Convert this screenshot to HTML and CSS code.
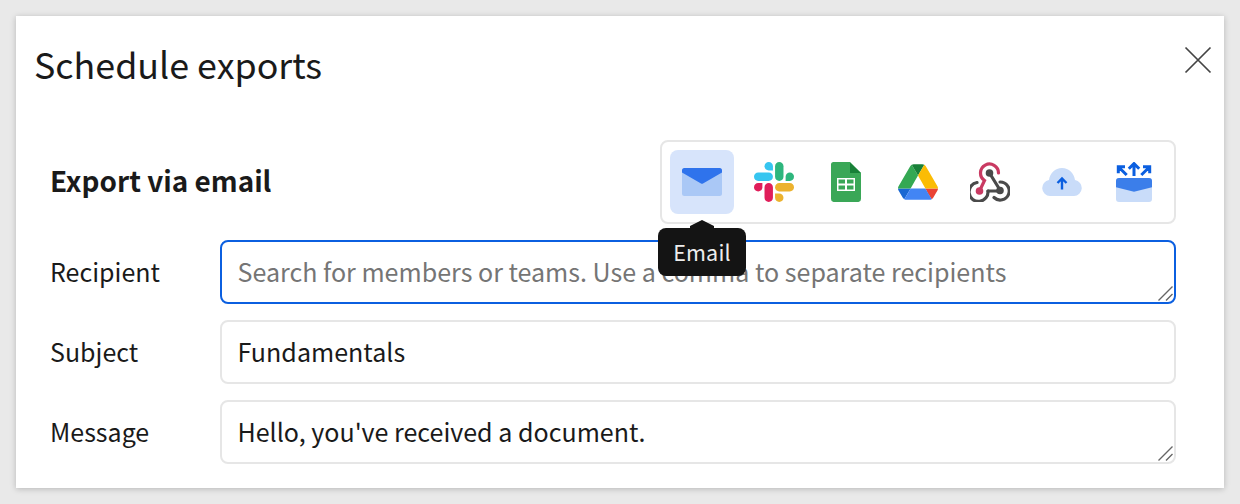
FILE: index.html
```html
<!DOCTYPE html>
<html lang="en">
<head>
<meta charset="utf-8">
<title>Schedule exports</title>
<link rel="stylesheet" href="styles.css">
</head>
<body>
<section class="modal">
  <header class="modal-header">
    <h1 class="modal-title">Schedule exports</h1>
    <button class="close" type="button" aria-label="Close">
      <svg width="28" height="28" viewBox="0 0 28 28"><path d="M1.5 1.500l25 25M26.500 1.500l-25 25" stroke="#444" stroke-width="1.700" fill="none"/></svg>
    </button>
  </header>
  <div class="form">
    <div class="via-row">
      <h2 class="via-title">Export via email</h2>
      <div class="picker">
        <div class="tile tile-active">
          <svg width="40" height="40" viewBox="0 0 40 40"><rect y="6" width="40" height="28" rx="2.500" fill="#aac8f6"/><path d="M2.500 6h35A2.500 2.500 0 0 1 40 8.500V10.500L21 21.400q-1 .5-2 0L0 10.500V8.500A2.500 2.500 0 0 1 2.500 6z" fill="#2f73ec"/></svg>
          <div class="tooltip">Email</div>
        </div>
        <div class="tile">
          <svg width="40" height="40" viewBox="0 0 122.800 122.800"><path d="M25.800 77.600c0 7.100-5.800 12.900-12.900 12.900S0 84.700 0 77.600s5.800-12.900 12.900-12.900h12.900v12.900z" fill="#E01E5A"/><path d="M32.300 77.600c0-7.100 5.800-12.900 12.900-12.900s12.900 5.800 12.900 12.900v32.300c0 7.100-5.800 12.900-12.900 12.900s-12.900-5.800-12.900-12.900V77.600z" fill="#E01E5A"/><path d="M45.200 25.800c-7.100 0-12.900-5.800-12.900-12.900S38.100 0 45.200 0s12.900 5.800 12.900 12.900v12.900H45.200z" fill="#36C5F0"/><path d="M45.200 32.300c7.100 0 12.900 5.800 12.900 12.900s-5.800 12.900-12.900 12.900H12.900C5.800 58.100 0 52.300 0 45.200s5.800-12.900 12.900-12.900h32.300z" fill="#36C5F0"/><path d="M97 45.200c0-7.100 5.800-12.900 12.900-12.900s12.900 5.800 12.900 12.900-5.800 12.900-12.900 12.900H97V45.200z" fill="#2EB67D"/><path d="M90.500 45.200c0 7.100-5.800 12.900-12.900 12.900s-12.900-5.800-12.900-12.900V12.900C64.700 5.800 70.500 0 77.600 0s12.900 5.800 12.900 12.900v32.300z" fill="#2EB67D"/><path d="M77.600 97c7.100 0 12.900 5.800 12.900 12.900s-5.800 12.900-12.900 12.900-12.900-5.800-12.900-12.900V97h12.900z" fill="#ECB22E"/><path d="M77.600 90.500c-7.100 0-12.900-5.800-12.900-12.900s5.800-12.900 12.900-12.900h32.300c7.100 0 12.900 5.800 12.900 12.900s-5.800 12.900-12.900 12.900H77.600z" fill="#ECB22E"/></svg>
        </div>
        <div class="tile">
          <svg width="40" height="40" viewBox="0 0 40 40"><path d="M7.500 0H24l11 11v26a3 3 0 0 1-2.500 3h-25A3 3 0 0 1 5 37V2.500A2.500 2.500 0 0 1 7.500 0z" fill="#3aa757"/><path d="M24 0.500L35 11H24z" fill="#188038"/><path d="M11 16h18v13H11z" fill="#fff"/><path d="M12.500 17.500h6.500v4h-6.500zM21 17.500h6.500v4H21zM12.500 23.500h6.500v4h-6.500zM21 23.500h6.500v4H21z" fill="#3aa757"/></svg>
        </div>
        <div class="tile">
          <svg width="40" height="36" viewBox="0 0 87.300 78"><path d="m6.600 66.850 3.850 6.650c.8 1.400 1.950 2.500 3.300 3.300l13.750-23.800h-27.500c0 1.550.4 3.100 1.200 4.500z" fill="#1967d2"/><path d="m43.650 25-13.750-23.800c-1.350.8-2.500 1.900-3.300 3.300l-25.400 44a9.060 9.060 0 0 0 -1.200 4.500h27.500z" fill="#34a853"/><path d="m73.550 76.800c1.350-.8 2.500-1.900 3.300-3.300l1.600-2.750 7.650-13.250c.8-1.400 1.200-2.950 1.200-4.500h-27.502l5.852 11.500z" fill="#ea4335"/><path d="m43.650 25 13.750-23.800c-1.350-.8-2.900-1.200-4.500-1.200h-18.500c-1.600 0-3.150.45-4.500 1.200z" fill="#188038"/><path d="m59.800 53h-32.300l-13.750 23.800c1.350.8 2.900 1.200 4.500 1.200h50.800c1.600 0 3.150-.45 4.500-1.200z" fill="#4285f4"/><path d="m73.400 26.500-12.700-22c-.8-1.400-1.950-2.500-3.300-3.300l-13.750 23.800 16.150 28h27.450c0-1.550-.4-3.100-1.200-4.500z" fill="#fbbc04"/></svg>
        </div>
        <div class="tile">
          <svg width="40" height="40" viewBox="0 0 40 40" fill="none" stroke-width="3.200" stroke-linecap="round"><path d="M19.500 11L30 28" stroke="#4a4a4a"/><path d="M18 29H30" stroke="#4a4a4a"/><path d="M7 20.500A9.500 9.500 0 1 0 18 29" stroke="#4a4a4a"/><path d="M30 20A9 9 0 1 1 24 35.500" stroke="#4a4a4a"/><path d="M9.500 29L14.500 18.500A9 9 0 1 1 28.500 11" stroke="#c93a62"/><circle cx="19.500" cy="11" r="3.800" fill="#4a4a4a" stroke="none"/><circle cx="9.500" cy="29" r="3.800" fill="#c93a62" stroke="none"/><circle cx="30" cy="28.500" r="3.800" fill="#4a4a4a" stroke="none"/></svg>
        </div>
        <div class="tile">
          <svg width="40" height="40" viewBox="0 0 40 40"><path d="M8 34a8 8 0 0 1-1-15.900C8 11 13 6 20 6c7 0 12 5 13 12.100A8 8 0 0 1 32 34z" fill="#c9dcf9"/><path d="M20 27.500V17M15.500 21l4.500-4.500 4.500 4.500" stroke="#0b5fe0" stroke-width="2.400" fill="none"/></svg>
        </div>
        <div class="tile">
          <svg width="40" height="40" viewBox="0 0 40 40"><path d="M2 19a3 3 0 0 1 3-3h30a3 3 0 0 1 3 3v18a3 3 0 0 1-3 3H5a3 3 0 0 1-3-3z" fill="#c9dcf9"/><path d="M5 16h30a3 3 0 0 1 3 3v6.300l-18 4.500-18-4.500V19a3 3 0 0 1 3-3z" fill="#3b7eea"/><path d="M20 14V2M14.800 6.800L20 1.600l5.200 5.200M12.700 13L4.300 4.700M4.300 11.300V4.700H11M27.300 13L35.700 4.700M35.700 11.300V4.700H29" stroke="#0b5fe0" stroke-width="3" fill="none"/></svg>
        </div>
      </div>
    </div>
    <div class="fields">
      <label class="field-label" for="recipient">Recipient</label>
      <div class="control-wrap">
        <textarea class="control control-focus" id="recipient" placeholder="Search for members or teams. Use a comma to separate recipients"></textarea>
        <svg class="grip" width="15" height="15" viewBox="0 0 15 15"><path d="M.5 14.500L14.500.5M8 14.500l6.500-6.500" stroke="#666" stroke-width="1.400" fill="none"/></svg>
      </div>
      <label class="field-label" for="subject">Subject</label>
      <div class="control-wrap">
        <input class="control control-input" id="subject" type="text" value="Fundamentals">
      </div>
      <label class="field-label" for="message">Message</label>
      <div class="control-wrap">
        <textarea class="control" id="message">Hello, you've received a document.</textarea>
        <svg class="grip" width="15" height="15" viewBox="0 0 15 15"><path d="M.5 14.500L14.500.5M8 14.500l6.500-6.500" stroke="#666" stroke-width="1.400" fill="none"/></svg>
      </div>
    </div>
  </div>
</section>
</body>
</html>
```
FILE: styles.css
```css
* { box-sizing: border-box; }
html, body { height: 100%; }
body {
  margin: 0;
  padding: 16px;
  background: #e9e9e9;
  color: #1a1a1a;
  font-family: "Noto Sans CJK SC", "Noto Sans", sans-serif;
  overflow: hidden;
}
.modal {
  height: 472px;
  background: #fff;
  box-shadow: 0 1px 6px rgba(0, 0, 0, .22);
  display: flex;
  flex-direction: column;
}
.modal-header {
  height: 124px;
  padding: 27px 12px 0 18px;
  display: flex;
  justify-content: space-between;
  align-items: flex-start;
}
.modal-title {
  margin: 0;
  font-size: 35.800px;
  font-weight: 400;
  line-height: 40px;
}
.close {
  width: 28px;
  height: 28px;
  margin-top: 3px;
  padding: 0;
  border: 0;
  background: none;
  display: block;
}
.close svg { display: block; }
.form {
  padding: 0 48px 0 34px;
  display: flex;
  flex-direction: column;
  gap: 16px;
}
.via-row {
  display: flex;
  justify-content: space-between;
  align-items: center;
}
.via-title {
  margin: 0;
  padding-bottom: 4px;
  font-size: 27.900px;
  font-weight: 600;
  line-height: 36px;
}
.picker {
  position: relative;
  display: flex;
  gap: 8px;
  padding: 8px;
  border: 2px solid #e6e6e6;
  border-radius: 8px;
}
.tile {
  position: relative;
  width: 64px;
  height: 64px;
  border-radius: 8px;
  display: flex;
  align-items: center;
  justify-content: center;
}
.tile svg { display: block; }
.tile-active { background: #d7e4fb; }
.tooltip {
  position: absolute;
  z-index: 2;
  top: 78px;
  left: -12px;
  width: 88px;
  height: 48px;
  background: #141414;
  border-radius: 8px;
  color: #ededed;
  font-size: 21.500px;
  line-height: 47px;
  letter-spacing: .2px;
  text-align: center;
}
.tooltip::before {
  content: "";
  position: absolute;
  left: 32px;
  top: -8px;
  width: 24px;
  height: 10px;
  background: #141414;
  clip-path: polygon(50% 0, 100% 60%, 100% 100%, 0 100%, 0 60%);
}
.fields {
  display: grid;
  grid-template-columns: 170px 1fr;
  grid-auto-rows: 64px;
  row-gap: 16px;
  align-items: center;
}
.field-label {
  padding-bottom: 2px;
  font-size: 25px;
  line-height: 32px;
}
.control-wrap {
  position: relative;
  height: 64px;
}
.control {
  display: block;
  width: 100%;
  height: 64px;
  padding: 13px 15.500px;
  border: 2px solid #e6e6e6;
  border-radius: 8px;
  background: #fff;
  color: #1a1a1a;
  font: inherit;
  font-size: 25.060px;
  line-height: 32px;
  outline: none;
  resize: none;
}
.control-input { padding: 0 15.500px 2px; }
.control-focus { border-color: #0b5fe0; }
.control::placeholder { color: #757575; opacity: 1; }
.grip {
  position: absolute;
  right: 3px;
  bottom: 3px;
  pointer-events: none;
}
```
